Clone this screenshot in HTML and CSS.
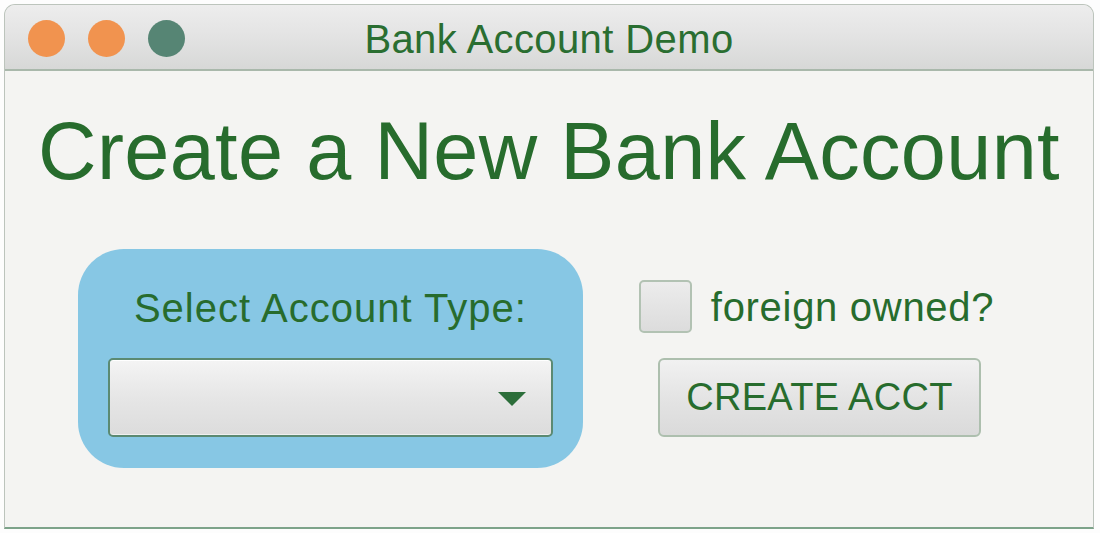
FILE: index.html
```html
<!DOCTYPE html>
<html>
<head>
<meta charset="utf-8">
<link rel="stylesheet" href="styles.css">
</head>
<body>
<div class="window">
  <div class="titlebar">
    <div class="lights">
      <span class="light orange"></span>
      <span class="light orange"></span>
      <span class="light green"></span>
    </div>
    <div class="title">Bank Account Demo</div>
    <div></div>
  </div>
  <div class="content">
    <h1 class="heading">Create a New Bank Account</h1>
    <div class="row">
      <div class="typebox">
        <div class="label">Select Account Type:</div>
        <div class="combo">
          <svg class="arrow" width="28" height="14" viewBox="0 0 28 14"><polygon points="0,0 28,0 14,14" fill="#2c6e3a"/></svg>
        </div>
      </div>
      <div class="side">
        <div class="checkrow">
          <span class="checkbox"></span>
          <span class="label owned">foreign owned?</span>
        </div>
        <div class="button">CREATE ACCT</div>
      </div>
    </div>
  </div>
</div>
</body>
</html>
```
FILE: styles.css
```css
html, body {
  margin: 0;
  padding: 0;
  background: #fdfdfd;
}
body {
  padding: 4px 5px 4px 4px;
  font-family: "Liberation Sans", Arial, sans-serif;
  color: #276c2d;
}
.window {
  width: 1088px;
  height: 522px;
  border: 1px solid #bcc4bc;
  border-bottom: 2px solid #7da38a;
  border-radius: 11px 11px 0 0;
  background: #f4f4f2;
  overflow: hidden;
  display: flex;
  flex-direction: column;
}
.titlebar {
  height: 64px;
  flex: none;
  border-bottom: 2px solid #a9b8ab;
  background: linear-gradient(#ededed, #e4e4e4 45%, #d7d8d7);
  display: grid;
  grid-template-columns: 1fr auto 1fr;
  align-items: center;
}
.lights {
  display: flex;
  gap: 23px;
  padding-left: 23px;
  padding-top: 3px;
}
.light {
  width: 37px;
  height: 37px;
  border-radius: 50%;
  display: block;
}
.light.orange { background: #f1934f; }
.light.green { background: #568574; }
.title {
  font-size: 40px;
  line-height: 44px;
  padding-top: 3px;
  letter-spacing: 0.4px;
  color: #2a6e31;
}
.content {
  display: flex;
  flex-direction: column;
  align-items: center;
}
.heading {
  margin: 32px 0 0;
  font-weight: normal;
  font-size: 81px;
  line-height: 96px;
  letter-spacing: 0.35px;
}
.row {
  margin-top: 50px;
  display: flex;
  align-items: flex-start;
  gap: 56px;
  margin-right: 26px;
}
.typebox {
  width: 505px;
  height: 219px;
  box-sizing: border-box;
  padding: 35px 30px 0;
  background: #87c7e4;
  border-radius: 46px;
  display: flex;
  flex-direction: column;
  align-items: center;
}
.label {
  font-size: 40px;
  line-height: 48px;
  white-space: nowrap;
  letter-spacing: 1px;
}
.label.owned {
  letter-spacing: 0.7px;
}
.typebox .label {
  margin-bottom: 26px;
}
.combo {
  width: 445px;
  height: 79px;
  box-sizing: border-box;
  border: 2px solid #5b8a72;
  border-radius: 5px;
  background: linear-gradient(#f4f4f4, #e6e6e6 50%, #dcdcdc);
  box-shadow: inset 0 1px 0 #ffffff, inset 0 -1px 0 #f0f0f0;
  display: flex;
  align-items: center;
  justify-content: flex-end;
  padding-right: 25px;
}
.arrow { display: block; margin-top: 2px; }
.side {
  margin-top: 31px;
  display: flex;
  flex-direction: column;
  align-items: center;
  gap: 25px;
}
.checkrow {
  display: flex;
  align-items: center;
  gap: 19px;
}
.checkbox {
  width: 53px;
  height: 53px;
  box-sizing: border-box;
  border: 2px solid #b2c2b3;
  border-radius: 5px;
  background: linear-gradient(#ececec, #dcdcdc);
  display: block;
}
.button {
  width: 323px;
  height: 79px;
  box-sizing: border-box;
  border: 2px solid #adbfae;
  border-radius: 6px;
  background: linear-gradient(#f1f1f1, #e4e4e4 50%, #dadada);
  display: flex;
  align-items: center;
  justify-content: center;
  font-size: 38px;
  letter-spacing: 0.3px;
  margin-left: 6px;
}
```
